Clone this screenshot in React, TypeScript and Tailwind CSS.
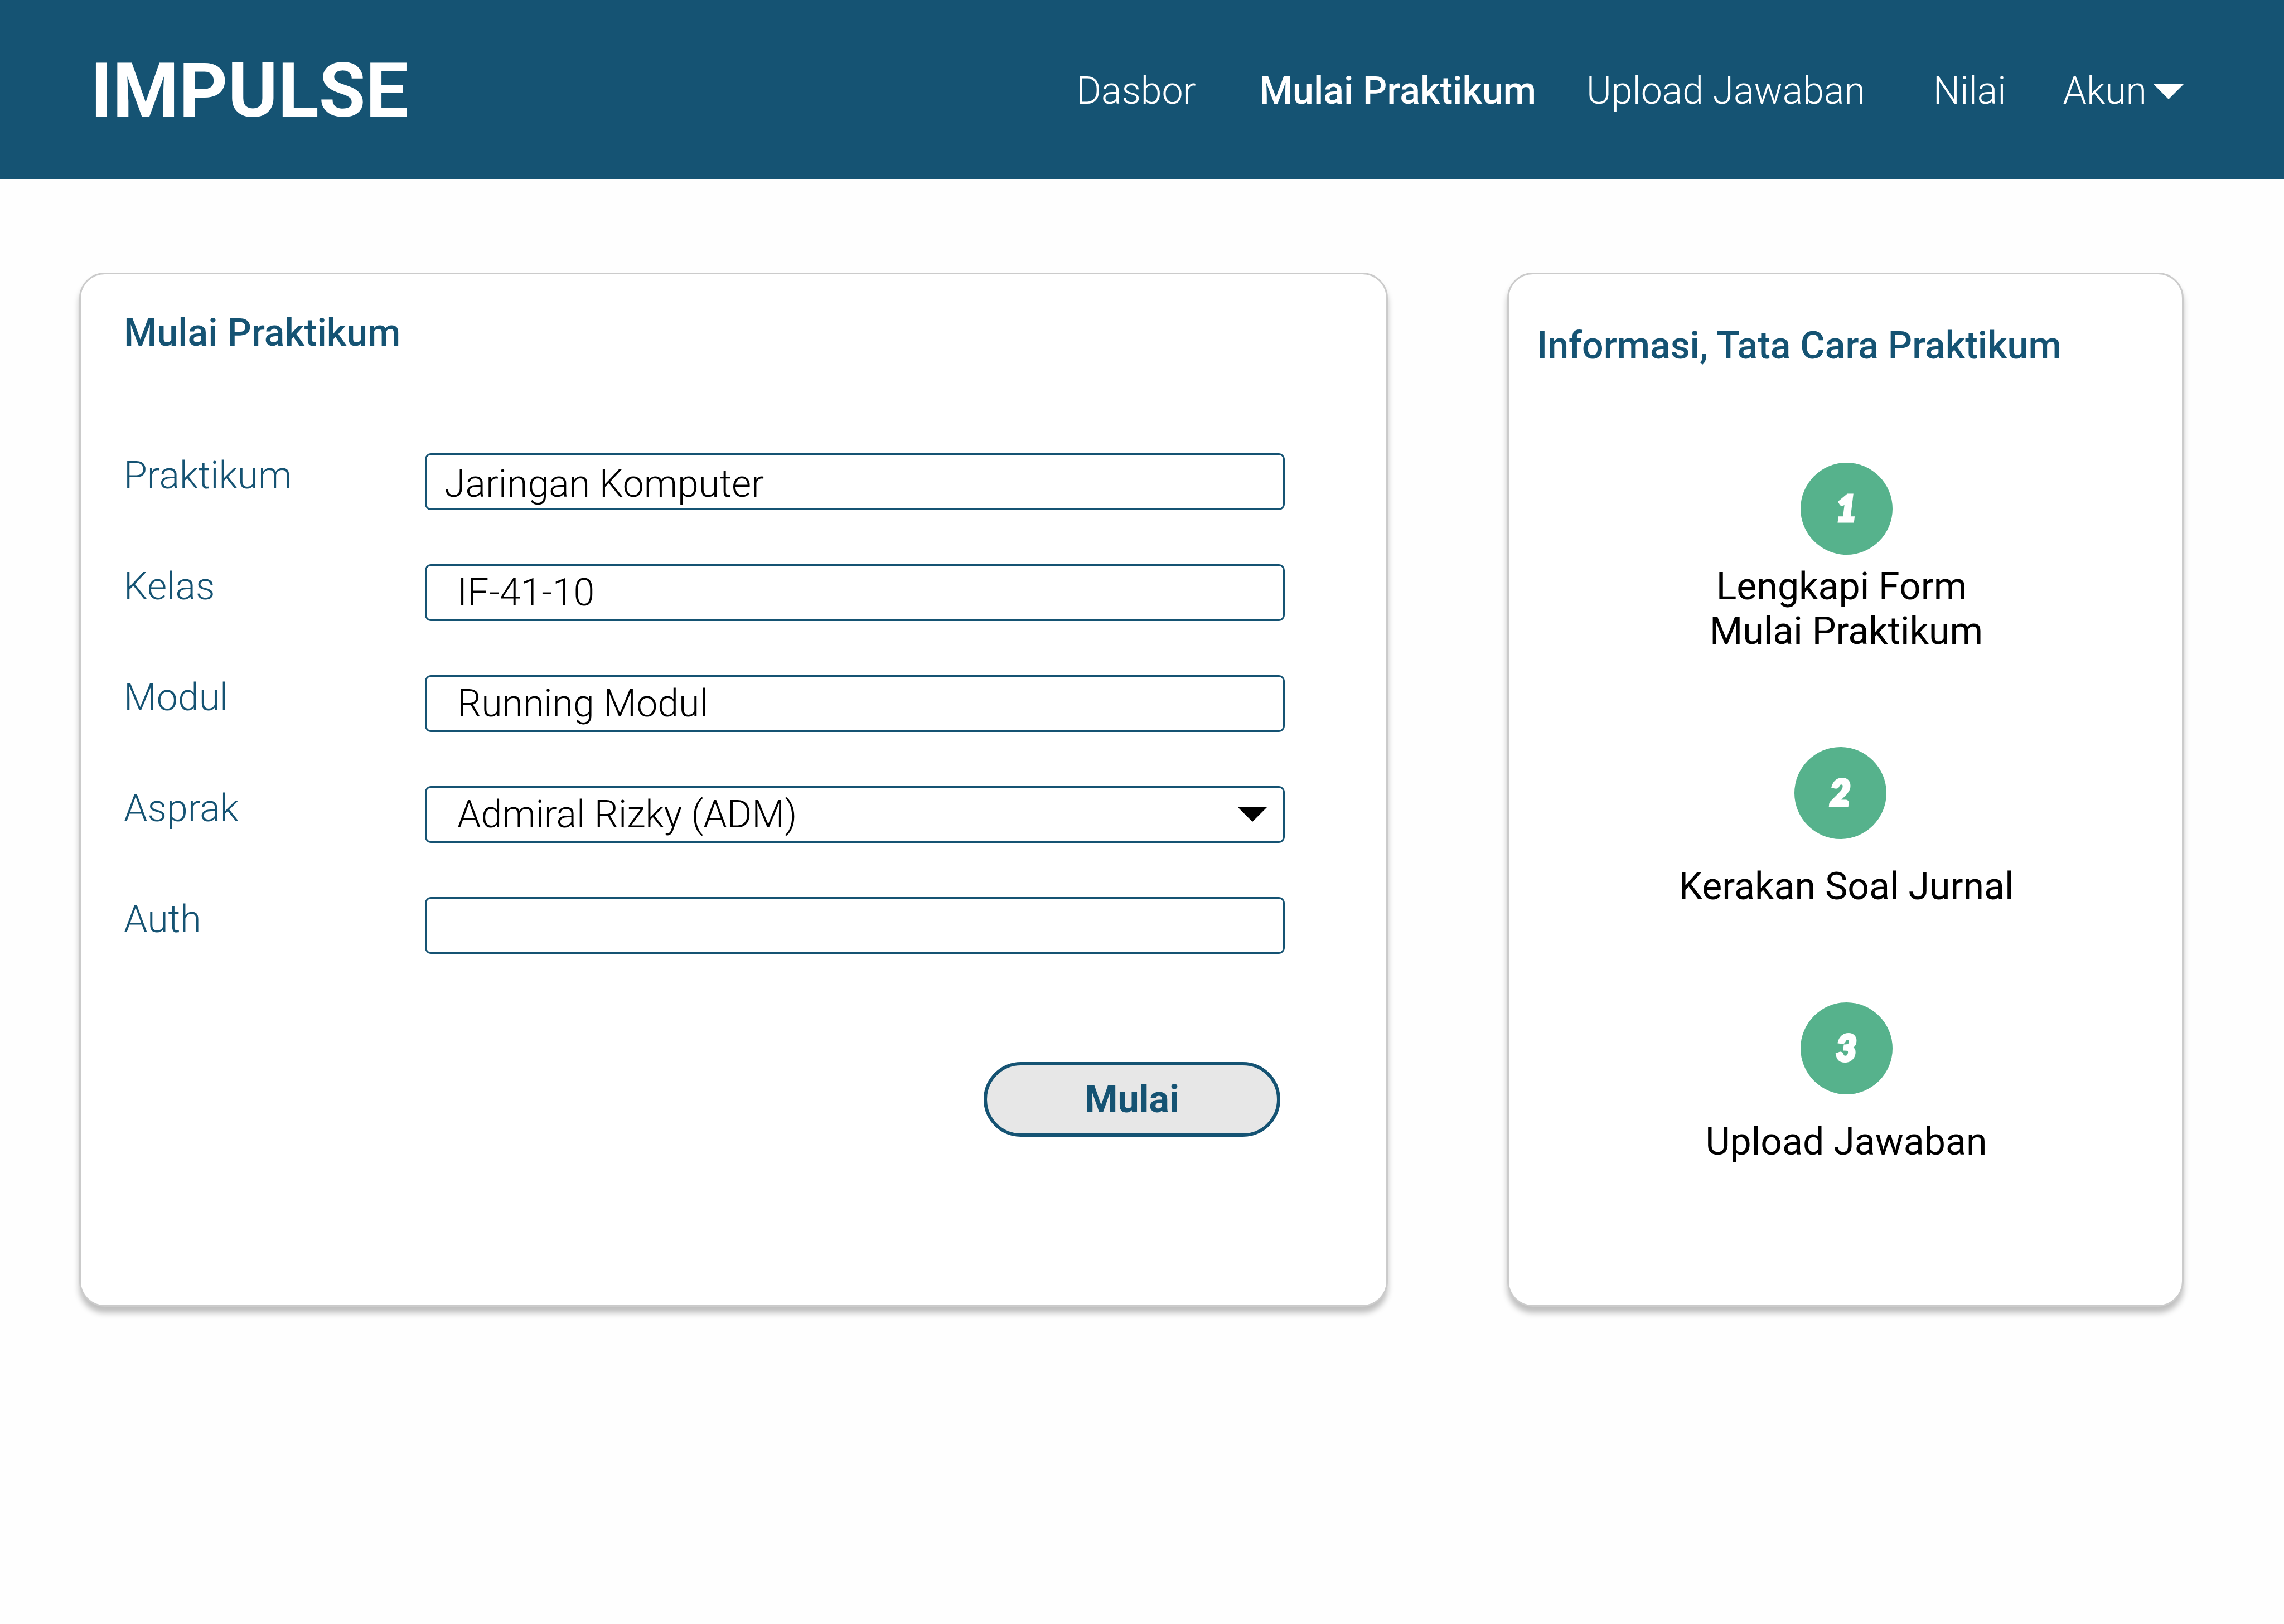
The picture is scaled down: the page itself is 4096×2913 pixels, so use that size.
import type { ReactNode } from "react";

function Caret({ className }: { className: string }) {
  return (
    <svg viewBox="0 0 54 27" aria-hidden="true" className={className}>
      <path d="M0 0H54L27 27Z" fill="currentColor" />
    </svg>
  );
}

const control =
  "block h-[102px] w-full appearance-none rounded-[11px] border-[3px] border-[#155373] bg-white pb-0 pr-4 font-light text-black outline-none";

function Field({ id, label, children }: { id: string; label: string; children: ReactNode }) {
  return (
    <div className="grid grid-cols-[540px_1fr] items-start">
      <label htmlFor={id} className="font-light">
        {label}
      </label>
      {children}
    </div>
  );
}

function Step({ n, children }: { n: number; children: ReactNode }) {
  return (
    <li className="flex flex-col items-center">
      <span
        className={
          "flex size-[165px] items-center justify-center rounded-full bg-[#56b28c] pb-1 font-['Lato',sans-serif] text-[64px] font-black text-white italic [-webkit-text-stroke:5px_white] [stroke-linejoin:round] " +
          (n === 2 ? "mr-[22px]" : "")
        }
      >
        {n}
      </span>
      {children}
    </li>
  );
}

const card =
  "h-[1855px] rounded-[46px] border-[3px] border-[#cbcbcb] bg-white shadow-[0_11px_11px_rgba(0,0,0,0.25)]";

export default function App() {
  return (
    <div className="min-h-screen bg-[#fefefe] font-['Roboto',sans-serif] text-[68px] leading-[80px] text-[#155373]">
      <header className="flex h-[321px] items-center justify-between bg-[#155373] pt-1 pr-[180px] pl-[162px] text-white">
        <a href="#" className="text-[136px] leading-[160px] font-bold">
          IMPULSE
        </a>
        <nav className="flex items-center font-light">
          <a href="#dasbor">Dasbor</a>
          <a href="#mulai" aria-current="page" className="ml-[114px] font-medium">
            Mulai Praktikum
          </a>
          <a href="#upload" className="ml-[90px]">Upload Jawaban</a>
          <a href="#nilai" className="ml-[122px]">Nilai</a>
          <button type="button" className="ml-[102px] flex items-center gap-[12px] font-light">
            Akun
            <Caret className="mt-1 h-[27px] w-[54px]" />
          </button>
        </nav>
      </header>

      <main className="grid grid-cols-[2347fr_1213fr] gap-x-[214px] pt-[168px] pr-[180px] pb-16 pl-[142px]">
        <section className={card + " pt-[65px] pr-[182px] pl-[77px]"}>
          <h1 className="font-medium">Mulai Praktikum</h1>
          <form className="mt-[176px]" onSubmit={(e) => e.preventDefault()}>
            <div className="flex flex-col gap-[97px]">
              <Field id="praktikum" label="Praktikum">
                <input id="praktikum" defaultValue="Jaringan Komputer" className={control + " pt-2 pl-[32px]"} />
              </Field>
              <Field id="kelas" label="Kelas">
                <input id="kelas" defaultValue="IF-41-10" className={control + " pl-[55px]"} />
              </Field>
              <Field id="modul" label="Modul">
                <input id="modul" defaultValue="Running Modul" className={control + " pl-[55px]"} />
              </Field>
              <Field id="asprak" label="Asprak">
                <div className="relative">
                  <select id="asprak" className={control + " pl-[55px]"}>
                    <option>Admiral Rizky (ADM)</option>
                  </select>
                  <Caret className="pointer-events-none absolute top-[37px] right-[31px] h-[27px] w-[54px] text-black" />
                </div>
              </Field>
              <Field id="auth" label="Auth">
                <input id="auth" className={control + " pl-[55px]"} />
              </Field>
            </div>
            <div className="mt-[194px] flex justify-end pr-[8px]">
              <button
                type="submit"
                className="h-[134px] w-[532px] rounded-full border-[6px] border-[#155373] bg-[#e7e7e7] font-bold"
              >
                Mulai
              </button>
            </div>
          </form>
        </section>

        <section className={card + " pt-[88px]"}>
          <h2 className="pl-[50px] font-medium">Informasi, Tata Cara Praktikum</h2>
          <ol className="mt-[170px] flex flex-col gap-[168px] pl-[3px] text-black">
            <Step n={1}>
              <p className="mt-[17px] text-center whitespace-pre">{"Lengkapi Form \nMulai Praktikum"}</p>
            </Step>
            <Step n={2}>
              <p className="mt-[45px]">Kerakan Soal Jurnal</p>
            </Step>
            <Step n={3}>
              <p className="mt-[45px]">Upload Jawaban</p>
            </Step>
          </ol>
        </section>
      </main>
    </div>
  );
}
